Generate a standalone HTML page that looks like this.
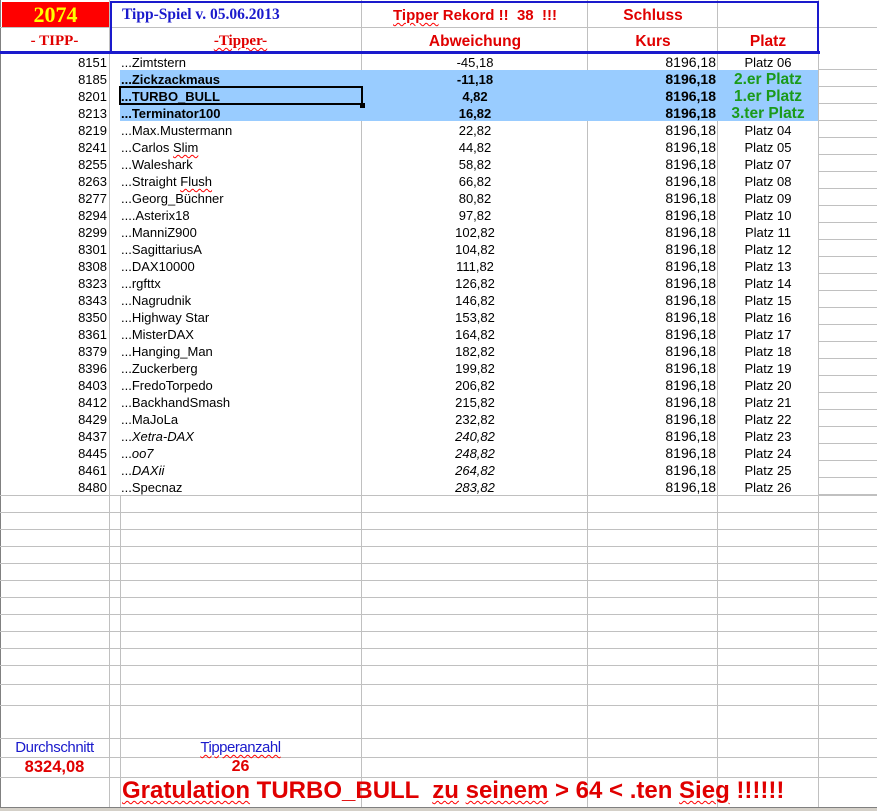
<!DOCTYPE html>
<html><head><meta charset="utf-8"><style>
*{margin:0;padding:0;box-sizing:border-box}
body{width:877px;height:811px;overflow:hidden;background:#fff;position:relative;font-family:"Liberation Sans",Arial,sans-serif;font-size:13px;color:#000}
.a{position:absolute;white-space:nowrap}
.v{position:absolute;top:0;width:1px;background:#c0c0c0}
.h{position:absolute;height:1px;background:#c0c0c0}
.r{text-align:right}.c{text-align:center}
.row{position:absolute;left:0;width:877px;height:17px;line-height:17px}
.row .n{position:absolute;left:0;width:107px;text-align:right}
.row .t{position:absolute;left:121px}
.row .d{position:absolute;left:362px;width:226px;text-align:center}
.row .k{position:absolute;left:588px;width:128px;text-align:right;font-size:14px}
.row .p{position:absolute;left:718px;width:100px;text-align:center}
.sq{text-decoration:underline wavy red;text-decoration-thickness:1px;text-underline-offset:2px}
.red{color:#e00000;font-weight:bold}
</style></head><body>
<div class="v" style="left:0;height:807px;background:#808080"></div>
<div class="v" style="left:109px;height:807px"></div>
<div class="v" style="left:120px;top:495px;height:312px"></div>
<div class="v" style="left:361px;height:807px"></div>
<div class="v" style="left:587px;height:807px"></div>
<div class="v" style="left:717px;height:807px"></div>
<div class="v" style="left:818px;height:807px"></div>
<div class="h" style="left:0;top:27px;width:877px"></div>
<div style="position:absolute;left:819px;top:53px;width:58px;height:442px;background:repeating-linear-gradient(to bottom,transparent 0 16px,#c0c0c0 16px 17px)"></div>
<div class="h" style="left:0;top:495px;width:877px"></div>
<div class="h" style="left:0;top:512px;width:877px"></div>
<div class="h" style="left:0;top:529px;width:877px"></div>
<div class="h" style="left:0;top:546px;width:877px"></div>
<div class="h" style="left:0;top:563px;width:877px"></div>
<div class="h" style="left:0;top:580px;width:877px"></div>
<div class="h" style="left:0;top:597px;width:877px"></div>
<div class="h" style="left:0;top:614px;width:877px"></div>
<div class="h" style="left:0;top:631px;width:877px"></div>
<div class="h" style="left:0;top:648px;width:877px"></div>
<div class="h" style="left:0;top:665px;width:877px"></div>
<div class="h" style="left:0;top:684px;width:877px"></div>
<div class="h" style="left:0;top:705px;width:877px"></div>
<div class="h" style="left:0;top:738px;width:877px"></div>
<div class="h" style="left:0;top:757px;width:877px"></div>
<div class="h" style="left:0;top:777px;width:877px"></div>

<div class="a" style="left:2px;top:2px;width:107px;height:25px;background:#ff0000;color:#ffff00;font:bold 22px 'Liberation Serif',serif;text-align:center;line-height:25px">2074</div>
<div style="position:absolute;left:110px;top:1px;width:709px;height:53px;border:2px solid #1a1acc;border-bottom:none"></div>
<div style="position:absolute;left:0;top:51px;width:820px;height:3px;background:#1a1acc"></div>
<div class="a" style="left:122px;top:6px;color:#1a1acc;font:bold 15.5px 'Liberation Serif',serif">Tipp-Spiel v. 05.06.2013</div>
<div class="a c red" style="left:362px;top:7px;width:226px;font-size:15px"><span class="sq">Tipper</span> Rekord !!&nbsp; 38&nbsp; !!!</div>
<div class="a c red" style="left:588px;top:7px;width:130px;font-size:15.5px">Schluss</div>
<div class="a c" style="left:0;top:33px;width:109px;color:#e00000;font:bold 15px 'Liberation Serif',serif">- TIPP-</div>
<div class="a c" style="left:120px;top:33px;width:241px;color:#e00000;font:bold 15px 'Liberation Serif',serif"><span class="sq">-Tipper-</span></div>
<div class="a c red" style="left:362px;top:33px;width:226px;font-size:15.5px">Abweichung</div>
<div class="a c red" style="left:588px;top:33px;width:130px;font-size:15.5px">Kurs</div>
<div class="a c red" style="left:718px;top:33px;width:100px;font-size:15.5px">Platz</div>

<div style="position:absolute;left:120px;top:70px;width:698px;height:51px;background:#99ccff"></div>

<div class="row" style="top:54px"><span class="n">8151</span><span class="t">...Zimtstern</span><span class="d">-45,18</span><span class="k">8196,18</span><span class="p">Platz 06</span></div>
<div class="row" style="top:71px;font-weight:bold"><span class="n" style="font-weight:normal">8185</span><span class="t">...Zickzackmaus</span><span class="d">-11,18</span><span class="k">8196,18</span><span class="p" style="color:#1a9a1a;font-size:15.5px">2.er Platz</span></div>
<div class="row" style="top:88px;font-weight:bold"><span class="n" style="font-weight:normal">8201</span><span class="t">...TURBO_BULL</span><span class="d">4,82</span><span class="k">8196,18</span><span class="p" style="color:#1a9a1a;font-size:15.5px">1.er Platz</span></div>
<div class="row" style="top:105px;font-weight:bold"><span class="n" style="font-weight:normal">8213</span><span class="t">...Terminator100</span><span class="d">16,82</span><span class="k">8196,18</span><span class="p" style="color:#1a9a1a;font-size:15.5px">3.ter Platz</span></div>
<div style="position:absolute;left:119px;top:86px;width:244px;height:19px;border:2px solid #000"></div>
<div style="position:absolute;left:360px;top:103px;width:5px;height:5px;background:#000"></div>

<div class="row" style="top:122px"><span class="n">8219</span><span class="t">...Max.Mustermann</span><span class="d">22,82</span><span class="k">8196,18</span><span class="p">Platz 04</span></div>
<div class="row" style="top:139px"><span class="n">8241</span><span class="t">...Carlos <span class="sq">Slim</span></span><span class="d">44,82</span><span class="k">8196,18</span><span class="p">Platz 05</span></div>
<div class="row" style="top:156px"><span class="n">8255</span><span class="t">...Waleshark</span><span class="d">58,82</span><span class="k">8196,18</span><span class="p">Platz 07</span></div>
<div class="row" style="top:173px"><span class="n">8263</span><span class="t">...Straight <span class="sq">Flush</span></span><span class="d">66,82</span><span class="k">8196,18</span><span class="p">Platz 08</span></div>
<div class="row" style="top:190px"><span class="n">8277</span><span class="t">...Georg_Büchner</span><span class="d">80,82</span><span class="k">8196,18</span><span class="p">Platz 09</span></div>
<div class="row" style="top:207px"><span class="n">8294</span><span class="t">....Asterix18</span><span class="d">97,82</span><span class="k">8196,18</span><span class="p">Platz 10</span></div>
<div class="row" style="top:224px"><span class="n">8299</span><span class="t">...ManniZ900</span><span class="d">102,82</span><span class="k">8196,18</span><span class="p">Platz 11</span></div>
<div class="row" style="top:241px"><span class="n">8301</span><span class="t">...SagittariusA</span><span class="d">104,82</span><span class="k">8196,18</span><span class="p">Platz 12</span></div>
<div class="row" style="top:258px"><span class="n">8308</span><span class="t">...DAX10000</span><span class="d">111,82</span><span class="k">8196,18</span><span class="p">Platz 13</span></div>
<div class="row" style="top:275px"><span class="n">8323</span><span class="t">...rgfttx</span><span class="d">126,82</span><span class="k">8196,18</span><span class="p">Platz 14</span></div>
<div class="row" style="top:292px"><span class="n">8343</span><span class="t">...Nagrudnik</span><span class="d">146,82</span><span class="k">8196,18</span><span class="p">Platz 15</span></div>
<div class="row" style="top:309px"><span class="n">8350</span><span class="t">...Highway Star</span><span class="d">153,82</span><span class="k">8196,18</span><span class="p">Platz 16</span></div>
<div class="row" style="top:326px"><span class="n">8361</span><span class="t">...MisterDAX</span><span class="d">164,82</span><span class="k">8196,18</span><span class="p">Platz 17</span></div>
<div class="row" style="top:343px"><span class="n">8379</span><span class="t">...Hanging_Man</span><span class="d">182,82</span><span class="k">8196,18</span><span class="p">Platz 18</span></div>
<div class="row" style="top:360px"><span class="n">8396</span><span class="t">...Zuckerberg</span><span class="d">199,82</span><span class="k">8196,18</span><span class="p">Platz 19</span></div>
<div class="row" style="top:377px"><span class="n">8403</span><span class="t">...FredoTorpedo</span><span class="d">206,82</span><span class="k">8196,18</span><span class="p">Platz 20</span></div>
<div class="row" style="top:394px"><span class="n">8412</span><span class="t">...BackhandSmash</span><span class="d">215,82</span><span class="k">8196,18</span><span class="p">Platz 21</span></div>
<div class="row" style="top:411px"><span class="n">8429</span><span class="t">...MaJoLa</span><span class="d">232,82</span><span class="k">8196,18</span><span class="p">Platz 22</span></div>
<div class="row" style="top:428px"><span class="n">8437</span><span class="t">...<i>Xetra-DAX</i></span><span class="d"><i>240,82</i></span><span class="k">8196,18</span><span class="p">Platz 23</span></div>
<div class="row" style="top:445px"><span class="n">8445</span><span class="t">...<i>oo7</i></span><span class="d"><i>248,82</i></span><span class="k">8196,18</span><span class="p">Platz 24</span></div>
<div class="row" style="top:462px"><span class="n">8461</span><span class="t">...<i>DAXii</i></span><span class="d"><i>264,82</i></span><span class="k">8196,18</span><span class="p">Platz 25</span></div>
<div class="row" style="top:479px"><span class="n">8480</span><span class="t">...Specnaz</span><span class="d"><i>283,82</i></span><span class="k">8196,18</span><span class="p">Platz 26</span></div>

<div class="a c" style="left:0;top:739px;width:109px;color:#1a1acc;font-size:15px;letter-spacing:-0.4px">Durchschnitt</div>
<div class="a c red" style="left:0;top:758px;width:109px;font-size:16.5px">8324,08</div>
<div class="a c" style="left:120px;top:739px;width:241px;color:#1a1acc;font-size:15px;letter-spacing:-0.5px"><span class="sq">Tipperanzahl</span></div>
<div class="a c red" style="left:120px;top:758px;width:241px;font-size:16px">26</div>
<div class="a red" style="left:122px;top:777px;font-size:24px;white-space:pre"><span class="sq">Gratulation</span> TURBO_BULL  <span class="sq">zu</span> <span class="sq">seinem</span> &gt; 64 &lt; .ten <span class="sq">Sieg</span> !!!!!!</div>
<div style="position:absolute;left:0;top:807px;width:877px;height:4px;background:#d4d0c8;border-top:1px solid #808080"></div>
</body></html>
